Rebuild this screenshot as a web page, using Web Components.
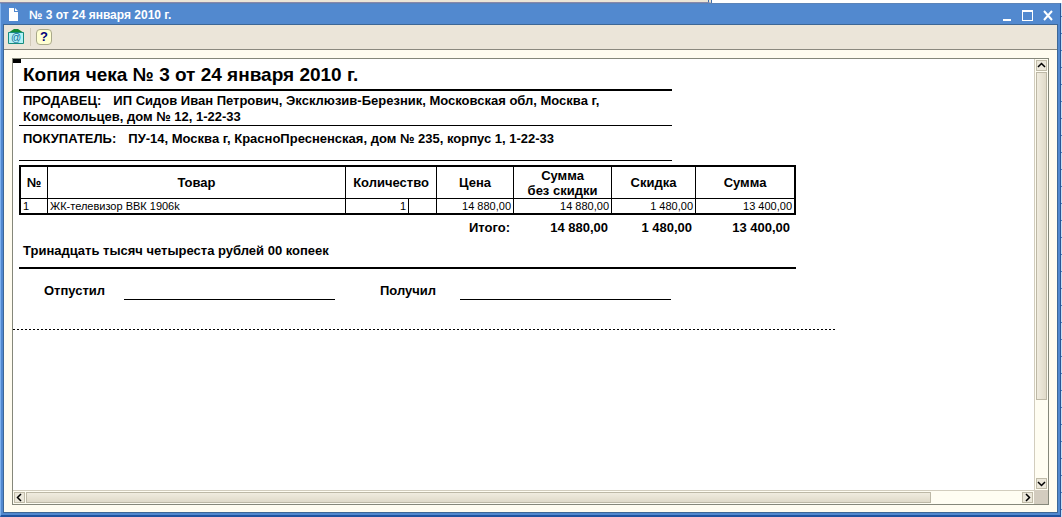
<!DOCTYPE html>
<html lang="ru">
<head>
<meta charset="utf-8">
<title>№ 3 от 24 января 2010 г.</title>
<style>
html, body { height: 100%; margin: 0; }
body { overflow: hidden; font: 13px/16px "Liberation Sans", Arial, sans-serif; color: #000; }
</style>
</head>
<body>
<app-desktop>
  <doc-window heading="№ 3 от 24 января 2010 г.">
    <tool-bar slot="toolbar"></tool-bar>
    <scroll-sheet><sales-receipt></sales-receipt></scroll-sheet>
  </doc-window>
</app-desktop>
<script>
class Base extends HTMLElement {
  connectedCallback() {
    if (this.shadowRoot) return;
    this.attachShadow({ mode: "open" }).innerHTML = this.render();
  }
}

customElements.define("app-desktop", class extends Base {
  render() { return `
<style>
:host { display: flex; flex-direction: column; height: 100%; box-sizing: border-box; padding-right: 1px;
  background: repeating-linear-gradient(#c8e0f8 0 16px, #4a80c0 16px 17px); }
.behind { flex: none; display: flex; height: 3px; margin-right: -1px; background: #fff; }
.behind i { width: 67%; box-sizing: border-box; background: #ece5d6; border-bottom: 1px solid #88a; border-right: 4px double #3f6fae; }
slot { display: block; flex: 1; min-height: 0; }
</style><div class="behind"><i></i></div><slot></slot>`; }
});

customElements.define("doc-window", class extends Base {
  render() { return `
<style>
:host { display: flex; flex-direction: column; height: 100%; box-sizing: border-box; background: #5289cf;
  border-left: 1px solid #7fb2ee; border-right: 1px solid #2a5596; border-bottom: 2px solid #1f53a0; border-top: 1px solid #5c84b8; padding: 0 2px 2px; }
header { flex: none; display: flex; align-items: center; box-sizing: border-box; height: 20px; padding: 1px 4px 0 5px; color: #fff; }
h1 { flex: 1; margin: 0 0 0 10px; font: bold 12px/16px "Liberation Sans", Arial, sans-serif; }
svg { display: block; }
button { border: 0; padding: 0; background: none; margin-left: 8px; }
main { flex: 1; min-height: 0; display: flex; flex-direction: column; border: 1px solid #3d6796; background: #fffcf0; }
.content { flex: 1; min-height: 0; padding: 8px 8px 7px; }
</style>
<header>
  <svg width="11" height="13" viewBox="0 0 11 13"><path fill="#fff" d="M1 0h5v4h4v9H1z"/><path fill="#fff" d="M7 0l3 3H7z"/></svg>
  <h1>${this.getAttribute("heading")}</h1>
  <button aria-label="Свернуть"><svg width="12" height="12"><path fill="#fff" d="M1 10h8v2H1z"/></svg></button>
  <button aria-label="Развернуть"><svg width="12" height="12"><path fill="#fff" fill-rule="evenodd" d="M0 1h11v11H0zM1 3v8h9V3z"/></svg></button>
  <button aria-label="Закрыть"><svg width="12" height="12"><path stroke="#fff" stroke-width="2" d="M2 2l8 9M10 2l-8 9"/></svg></button>
</header>
<main><slot name="toolbar"></slot><div class="content"><slot></slot></div></main>`; }
});

customElements.define("tool-bar", class extends Base {
  render() { return `
<style>
:host { display: flex; align-items: center; flex: none; height: 24px; padding-left: 4px; background: #ebe5d9; border-bottom: 1px solid #8a887e; }
button { border: 0; padding: 0; background: none; }
svg { display: block; }
.sep { width: 1px; height: 18px; margin: 0 5px 0 6px; background: #d2cab8; }
text { font-family: "Liberation Sans", Arial, sans-serif; }
.help { width: 16px; height: 16px; box-sizing: border-box; border: 1px solid #a9a98a; border-radius: 4px; background: #ffffd2; color: #00007a; font: bold 13px/14px "Liberation Sans", Arial, sans-serif; text-align: center; }
</style>
<button aria-label="Отправить"><svg width="16" height="16"><path fill="#128a34" d="M0 4l6-4h4l6 4z"/><path fill="#b4f2f6" stroke="#178c80" d="M.5 3.500h15v11H.5z"/><text x="8" y="12" font-size="10" text-anchor="middle" fill="#0c6a98">@</text></svg></button>
<span class="sep"></span>
<button class="help" aria-label="Справка">?</button>`; }
});

customElements.define("scroll-bar", class extends Base {
  render() {
    const v = this.hasAttribute("vertical");
    const arrow = d => `<svg width="11" height="11"><path fill="none" stroke="#000" stroke-width="1.500" d="${d}"/></svg>`;
    return `
<style>
:host { display: flex; flex-direction: ${v ? "column" : "row"}; gap: 1px; box-sizing: border-box; padding: 1px; background: #fffdf2; border-${v ? "left" : "top"}: 1px solid #d2cdbe; }
button { flex: none; width: 11px; height: 11px; padding: 0; border: 0; outline: 1px solid #c0bba8; outline-offset: -1px; background: #ebe7da; }
svg { display: block; }
.track { flex: 1; display: flex; flex-direction: inherit; }
.thumb { flex: 0 0 ${v ? "81%" : "91%"}; box-sizing: border-box; border: 1px solid #bdb8a6; background: linear-gradient(${v ? "to right" : "to bottom"}, #f0ecdf, #e0dac9); }
</style>
<button aria-label="Назад">${arrow(v ? "M2 7l3.500-3.500L9 7" : "M7 2L3.500 5.500 7 9")}</button>
<div class="track"><div class="thumb"></div></div>
<button aria-label="Вперёд">${arrow(v ? "M2 4l3.500 3.500L9 4" : "M4 2l3.500 3.500L4 9")}</button>`;
  }
});

customElements.define("scroll-sheet", class extends Base {
  render() { return `
<style>
:host { display: grid; grid-template: minmax(0, 1fr) 14px / minmax(0, 1fr) 14px; height: 100%; box-sizing: border-box; border: 1px solid #85877a; background: #fff; }
.view { overflow: hidden; }
.corner { background: #d3ccbf; }
</style>
<div class="view"><slot></slot></div><scroll-bar vertical></scroll-bar><scroll-bar></scroll-bar><div class="corner"></div>`; }
});

customElements.define("sales-receipt", class extends Base {
  render() { return `
<style>
:host { display: block; position: relative; }
.mark { position: absolute; left: 0; top: 0; width: 8px; height: 4px; background: #000; }
.page { box-sizing: border-box; width: 783px; padding-left: 6px; font: bold 13px/16px "Liberation Sans", Arial, sans-serif; }
h2, p { margin: 0; box-sizing: border-box; width: 653px; padding: 0 4px; }
h2 { font-size: 19px; line-height: 32px; height: 32px; border-bottom: 2px solid #000; }
p { height: 35px; border-bottom: 1px solid #000; white-space: nowrap; }
p b { margin-right: 12px; }
.seller { padding-top: 2px; }
.buyer { padding-top: 5px; }
table { width: 100%; margin-top: 4px; table-layout: fixed; border-spacing: 0; }
th, td { box-sizing: border-box; padding: 0 2px; border-right: 1px solid #000; text-align: right; white-space: nowrap; }
thead th { height: 34px; padding: 0; border-top: 2px solid #000; border-bottom: 1px solid #000; line-height: 15px; text-align: center; }
tbody td { height: 16px; padding: 0 2px; border-bottom: 2px solid #000; font: 11px/14px "Liberation Sans", Arial, sans-serif; }
tbody .l { text-align: left; }
thead th:first-child, tbody td:first-child { border-left: 2px solid #000; }
thead th:last-child, tbody td:last-child { border-right: 2px solid #000; }
tfoot td { height: 26px; padding: 0 4px; border: 0; }
tfoot td:last-child { padding-right: 6px; }
.words { width: 100%; height: 28px; padding-top: 2px; border-bottom-width: 2px; }
.signs { display: flex; margin: 14px 0 29px; }
.signs div { display: flex; width: 336px; }
.signs span { width: 80px; margin-left: 25px; }
.signs i { width: 211px; height: 17px; box-sizing: border-box; border-bottom: 1px solid #000; }
.cut { width: 823px; height: 1px; background: repeating-linear-gradient(to right, #000 0 2px, #fff 2px 4px); }
</style>
<div class="mark"></div>
<div class="page">
<h2>Копия чека № 3 от 24 января 2010 г.</h2>
<p class="seller"><b>ПРОДАВЕЦ:</b>ИП Сидов Иван Петрович, Эксклюзив-Березник, Московская обл, Москва г,<br>Комсомольцев, дом № 12, 1-22-33</p>
<p class="buyer"><b>ПОКУПАТЕЛЬ:</b>ПУ-14, Москва г, КрасноПресненская, дом № 235, корпус 1, 1-22-33</p>
<table>
<colgroup><col style="width:29px"><col style="width:298px"><col style="width:63px"><col style="width:28px"><col style="width:77px"><col style="width:98px"><col style="width:84px"><col style="width:100px"></colgroup>
<thead><tr><th>№</th><th>Товар</th><th colspan="2">Количество</th><th>Цена</th><th>Сумма<br>без скидки</th><th>Скидка</th><th>Сумма</th></tr></thead>
<tbody><tr><td class="l">1</td><td class="l">ЖК-телевизор ВВК 1906k</td><td>1</td><td></td><td>14 880,00</td><td>14 880,00</td><td>1 480,00</td><td>13 400,00</td></tr></tbody>
<tfoot><tr><td colspan="5">Итого:</td><td>14 880,00</td><td>1 480,00</td><td>13 400,00</td></tr></tfoot>
</table>
<p class="words">Тринадцать тысяч четыреста рублей 00 копеек</p>
<div class="signs"><div><span>Отпустил</span><i></i></div><div><span>Получил</span><i></i></div></div>
</div>
<div class="cut"></div>`; }
});
</script>
</body>
</html>
